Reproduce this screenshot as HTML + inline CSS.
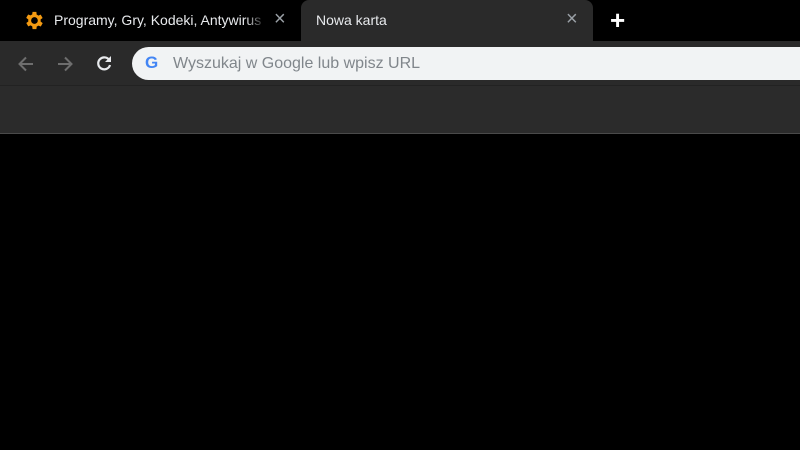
<!DOCTYPE html>
<html><head><style>
body{margin:0;width:800px;height:450px;background:#000;overflow:hidden;font-family:"Liberation Sans",sans-serif;position:relative}
.a{position:absolute}
</style></head><body>
<div class="a" style="left:0;top:0;width:800px;height:41px;background:#000"></div>
<svg class="a" style="left:22px;top:9px" width="23" height="23" viewBox="0 0 24 24"><path fill="#f39a12" d="M19.4 13a7.5 7.5 0 000-2l2.1-1.6-2-3.5-2.5 1a7 7 0 00-1.7-1L15 3h-4l-.4 2.7a7 7 0 00-1.7 1l-2.5-1-2 3.5L6.6 11a7.5 7.5 0 000 2l-2.1 1.6 2 3.5 2.5-1a7 7 0 001.7 1L11 21h4l.4-2.7a7 7 0 001.7-1l2.5 1 2-3.5zM13 15.5a3.5 3.5 0 110-7 3.5 3.5 0 010 7z"/></svg>
<div class="a" style="left:54px;top:12px;font-size:14px;color:#e8eaed;white-space:nowrap;width:212px;overflow:hidden;-webkit-mask-image:linear-gradient(90deg,#000 90%,transparent)">Programy, Gry, Kodeki, Antywirus</div>
<div class="a" style="left:274px;top:8px;font-size:20px;color:#9aa0a6">×</div>
<div class="a" style="left:301px;top:0;width:292px;height:44px;background:#2a2a2a;border-radius:8px 8px 0 0"></div>
<div class="a" style="left:316px;top:12px;font-size:14px;color:#e8eaed">Nowa karta</div>
<div class="a" style="left:566px;top:8px;font-size:20px;color:#9aa0a6">×</div>
<div class="a" style="left:610px;top:5px;font-size:26px;color:#fff;font-weight:bold">+</div>
<div class="a" style="left:0;top:41px;width:800px;height:44px;background:#2a2a2a"></div>
<div class="a" style="left:0;top:85px;width:800px;height:1px;background:#222"></div>
<div class="a" style="left:0;top:86px;width:800px;height:47px;background:#2b2b2b"></div>
<div class="a" style="left:0;top:133px;width:800px;height:1px;background:#4a4a4a"></div>
<svg class="a" style="left:16px;top:54px" width="20" height="20" viewBox="0 0 20 20"><path d="M17 10H4M10 3.5L3.5 10l6.5 6.5" stroke="#6e6e6e" stroke-width="2" fill="none"/></svg>
<svg class="a" style="left:55px;top:54px" width="20" height="20" viewBox="0 0 20 20"><path d="M3 10h13M10 3.5l6.5 6.5-6.5 6.5" stroke="#6e6e6e" stroke-width="2" fill="none"/></svg>
<svg class="a" style="left:94px;top:53px" width="20" height="20" viewBox="0 0 20 20"><path d="M15.5 7.5A6 6 0 1016 12" stroke="#e8eaed" stroke-width="2.2" fill="none"/><path d="M17 3v6h-6z" fill="#e8eaed"/></svg>
<div class="a" style="left:132px;top:47px;width:700px;height:33px;background:#f1f3f4;border-radius:17px"></div>
<div class="a" style="left:145px;top:53px;font-size:17px;font-weight:bold;color:#4285f4">G</div>
<div class="a" style="left:173px;top:55px;font-size:16px;color:#80868b">Wyszukaj w Google lub wpisz URL</div>
</body></html>
